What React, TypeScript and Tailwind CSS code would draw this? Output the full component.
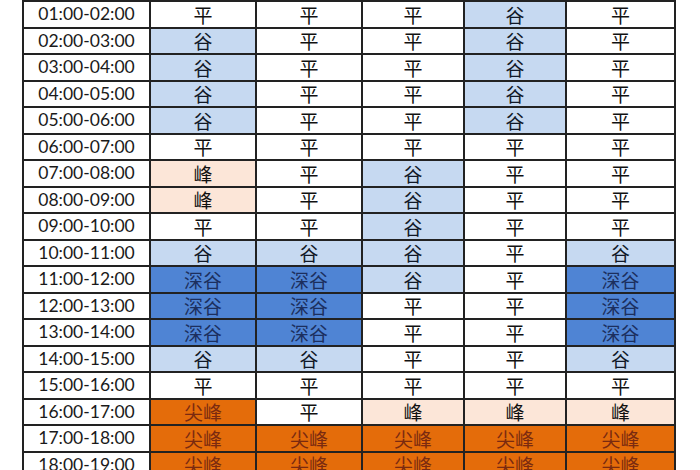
const rows: [string, string[]][] = [
  ["01:00-02:00", ["平", "平", "平", "谷", "平"]],
  ["02:00-03:00", ["谷", "平", "平", "谷", "平"]],
  ["03:00-04:00", ["谷", "平", "平", "谷", "平"]],
  ["04:00-05:00", ["谷", "平", "平", "谷", "平"]],
  ["05:00-06:00", ["谷", "平", "平", "谷", "平"]],
  ["06:00-07:00", ["平", "平", "平", "平", "平"]],
  ["07:00-08:00", ["峰", "平", "谷", "平", "平"]],
  ["08:00-09:00", ["峰", "平", "谷", "平", "平"]],
  ["09:00-10:00", ["平", "平", "谷", "平", "平"]],
  ["10:00-11:00", ["谷", "谷", "谷", "平", "谷"]],
  ["11:00-12:00", ["深谷", "深谷", "谷", "平", "深谷"]],
  ["12:00-13:00", ["深谷", "深谷", "平", "平", "深谷"]],
  ["13:00-14:00", ["深谷", "深谷", "平", "平", "深谷"]],
  ["14:00-15:00", ["谷", "谷", "平", "平", "谷"]],
  ["15:00-16:00", ["平", "平", "平", "平", "平"]],
  ["16:00-17:00", ["尖峰", "平", "峰", "峰", "峰"]],
  ["17:00-18:00", ["尖峰", "尖峰", "尖峰", "尖峰", "尖峰"]],
  ["18:00-19:00", ["尖峰", "尖峰", "尖峰", "尖峰", "尖峰"]],
];

const widths = ["w-[106px]", "w-[106px]", "w-[102px]", "w-[102px]", "w-[109px]"];

const tone: Record<string, string> = {
  平: "bg-white text-[#111]",
  谷: "bg-[#c6d9f1] text-[#111827]",
  深谷: "bg-[#4f84d4] text-[#1c2f5e]",
  峰: "bg-[#fce6d8] text-[#111]",
  尖峰: "bg-[#e46c0a] text-[#7a2a10]",
};

export default function App() {
  return (
    <div className="w-[700px] h-[470px] overflow-hidden bg-white">
      <div className="ml-[22px] w-[654px] border-l-2 border-t-2 border-[#222]">
        {rows.map(([time, cells]) => (
          <div key={time} className="flex h-[26.5px] border-b-2 border-[#222]">
            <div className="w-[127px] flex items-center justify-center border-r-2 border-[#222] text-[17.5px] text-[#1a1a1a] font-['Lato','Liberation_Sans',sans-serif]">
              {time}
            </div>
            {cells.map((c, i) => (
              <div
                key={i}
                className={`${widths[i]} ${tone[c]} flex items-center justify-center border-r-2 border-[#222] text-[19px] leading-none font-['Noto_Sans_CJK_SC','Noto_Sans_CJK_JP',sans-serif]`}
              >
                {c}
              </div>
            ))}
          </div>
        ))}
      </div>
    </div>
  );
}
